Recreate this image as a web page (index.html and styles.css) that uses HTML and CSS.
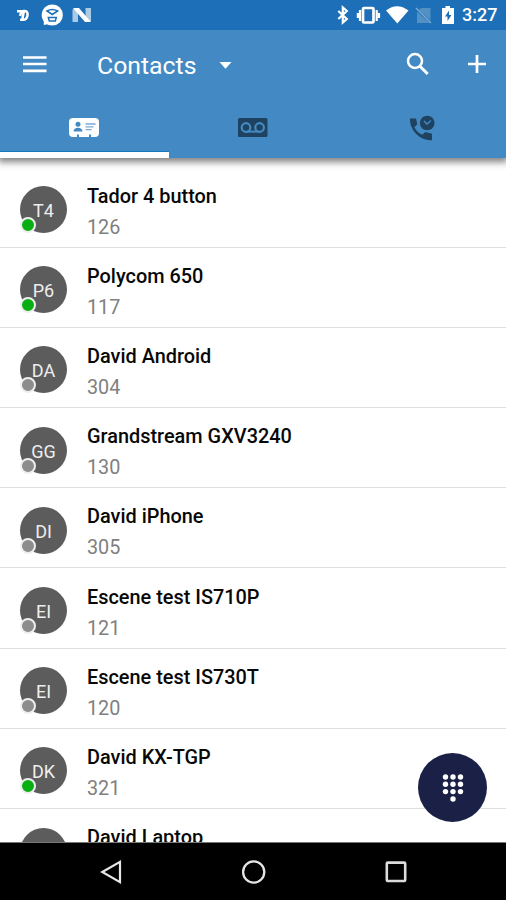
FILE: index.html
```
<!DOCTYPE html>
<html lang="en">
<head>
  <meta charset="UTF-8">
  <title>Contacts</title>
  <link rel="stylesheet" href="styles.css">
</head>
<body>

  <!-- Status bar -->
  <div class="status-bar">
    <svg class="status-left" width="100" height="30" viewBox="0 0 100 30">
      <path d="M17 11.300h4.500l-1.500 4.500M22.300 19.800l1.600-8.800h1c4.500 0 3 8.800-1.800 8.800h-3" fill="none" stroke="#fff" stroke-width="2.500"/>
      <path d="M43.800 18v7l5-1z" fill="#fff"/>
      <circle cx="52.300" cy="15" r="10.600" fill="#fff"/>
      <path d="M47 11q5.300-3 10.600 0l-5.300 3.500zM48.300 17.500h8l-1 3.500h-6z" fill="none" stroke="#1d70b7" stroke-width="1.500"/>
      <path d="M72.500 9.500l5.500-1.500v14h-5.500zM85.500 8h5.500v13l-5.500 1z" fill="#a9cbe6"/>
      <path d="M73 8h6l12 14h-6z" fill="#fff"/>
    </svg>
    <div class="status-right">
      <svg width="126" height="30" viewBox="332 0 126 30">
        <path d="M338.300 11l8.500 8-4 3.500v-15l4 3.500-8.500 8" fill="none" stroke="#fff" stroke-width="2.200"/>
        <rect x="363" y="8" width="10.500" height="14.500" rx="1" fill="none" stroke="#fff" stroke-width="2.700"/>
        <path d="M360 10v11M376.700 10v11M357.900 13v5M379 13v5" stroke="#fff" stroke-width="2.200"/>
        <path d="M386 10.500q11-8.500 22.500 0L397.300 23.600z" fill="#fff"/>
        <path d="M421 8h9.500v15H417V12z" fill="#5390c4"/>
        <path d="M415.500 8.500L431.500 23" stroke="#1d70b7" stroke-width="2.600"/>
        <path d="M416 8L431 23" stroke="#79a9d3" stroke-width="1.500"/>
        <path d="M445.500 6h4.500v2h4v16h-12V8h3.500z" fill="#fff"/>
        <path d="M449 10.500l-4 6h2.500V21l4-6H449z" fill="#1d70b7"/>
      </svg>
      <span class="clock">3:27</span>
    </div>
  </div>

  <!-- App bar with tabs -->
  <header class="app-bar">
    <div class="toolbar">
      <svg class="menu-icon" width="24" height="20" viewBox="0 0 24 20">
        <path d="M0 2.500h23.500M0 9h23.500M0 15.800h23.500" stroke="#fff" stroke-width="2.700"/>
      </svg>
      <h1 class="title">Contacts</h1>
      <svg class="caret" width="14" height="7" viewBox="0 0 14 7"><path d="M.500 0h12L6.500 6.700z" fill="#fff"/></svg>
      <svg class="search-icon" width="24" height="26" viewBox="0 0 24 26">
        <circle cx="9" cy="9" r="7" fill="none" stroke="#fff" stroke-width="2.500"/>
        <path d="M13.700 14l8 8" stroke="#fff" stroke-width="3"/>
      </svg>
      <svg class="plus-icon" width="18" height="20" viewBox="0 0 18 20"><path d="M0 9h18M9 0v18" stroke="#fff" stroke-width="2.700"/></svg>
    </div>
    <nav class="tabs">
      <a class="tab active">
        <svg width="32" height="20" viewBox="0 0 32 20">
          <rect x="1" y="0" width="30" height="19" rx="4" fill="#fff"/>
          <path d="M10 16.500V19M22 16.500V19" stroke="#438ac4" stroke-width="2"/>
          <circle cx="10" cy="6.300" r="2.500" fill="#438ac4"/>
          <path d="M5.500 13.500c0-5 9-5 9 0z" fill="#438ac4"/>
          <path d="M17.500 6h10M17.500 8.800h8M17.500 11.600h6" stroke="#7ca8d6" stroke-width="1.300"/>
        </svg>
      </a>
      <a class="tab">
        <svg width="32" height="20" viewBox="0 0 32 20">
          <rect x="1" y="0" width="29.500" height="19" rx="1.500" fill="#1e425f"/>
          <path d="M8.500 13.600h15" stroke="#438ac4" stroke-width="2"/>
          <circle cx="9" cy="9.500" r="4.300" fill="#1e425f" stroke="#438ac4" stroke-width="2.200"/>
          <circle cx="22.600" cy="9.500" r="4.300" fill="#1e425f" stroke="#438ac4" stroke-width="2.200"/>
        </svg>
      </a>
      <a class="tab">
        <svg width="28" height="26" viewBox="0 0 28 26">
          <path d="M2 3.500h6l1.300 5.700-3 3q3 5.500 8 7.600l3-2.700L24 18.700V25.300C11.500 25.600 1.600 15 2 3.500z" fill="#1e425f"/>
          <circle cx="19.200" cy="8" r="7.300" fill="#1e425f"/>
          <path d="M16 6l3 3 4-3.500" fill="none" stroke="#438ac4" stroke-width="1.400"/>
        </svg>
      </a>
    </nav>
  </header>

  <main class="contacts">
    <div class="contact">
      <div class="avatar">T4<i class="presence online"></i></div>
      <div class="info"><div class="name">Tador 4 button</div><div class="number">126</div></div>
    </div>
    <div class="contact">
      <div class="avatar">P6<i class="presence online"></i></div>
      <div class="info"><div class="name">Polycom 650</div><div class="number">117</div></div>
    </div>
    <div class="contact">
      <div class="avatar">DA<i class="presence"></i></div>
      <div class="info"><div class="name">David Android</div><div class="number">304</div></div>
    </div>
    <div class="contact">
      <div class="avatar">GG<i class="presence"></i></div>
      <div class="info"><div class="name">Grandstream GXV3240</div><div class="number">130</div></div>
    </div>
    <div class="contact">
      <div class="avatar">DI<i class="presence"></i></div>
      <div class="info"><div class="name">David iPhone</div><div class="number">305</div></div>
    </div>
    <div class="contact">
      <div class="avatar">EI<i class="presence"></i></div>
      <div class="info"><div class="name">Escene test IS710P</div><div class="number">121</div></div>
    </div>
    <div class="contact">
      <div class="avatar">EI<i class="presence"></i></div>
      <div class="info"><div class="name">Escene test IS730T</div><div class="number">120</div></div>
    </div>
    <div class="contact">
      <div class="avatar">DK<i class="presence online"></i></div>
      <div class="info"><div class="name">David KX-TGP</div><div class="number">321</div></div>
    </div>
    <div class="contact">
      <div class="avatar"></div>
      <div class="info"><div class="name">David Laptop</div></div>
    </div>
  </main>

  <!-- Dialpad button -->
  <button class="dialpad">
    <svg width="24" height="30" viewBox="0 0 24 30" fill="#fff">
      <circle cx="4.500" cy="4" r="2.700"/><circle cx="12" cy="4" r="2.700"/><circle cx="19.500" cy="4" r="2.700"/>
      <circle cx="4.500" cy="11.300" r="2.700"/><circle cx="12" cy="11.300" r="2.700"/><circle cx="19.500" cy="11.300" r="2.700"/>
      <circle cx="4.500" cy="18.600" r="2.700"/><circle cx="12" cy="18.600" r="2.700"/><circle cx="19.500" cy="18.600" r="2.700"/>
      <circle cx="12" cy="26" r="2.700"/>
    </svg>
  </button>

  <footer class="nav-bar">
    <svg width="24" height="26" viewBox="0 0 24 26"><path d="M3.300 13L21 2.800v20.400z" fill="none" stroke="#e6e6e6" stroke-width="2.200"/></svg>
    <svg width="26" height="26" viewBox="0 0 26 26"><circle cx="12.700" cy="13" r="10.600" fill="none" stroke="#e6e6e6" stroke-width="2.300"/></svg>
    <svg width="24" height="26" viewBox="0 0 24 26"><rect x="2.800" y="3.600" width="18.400" height="18.400" rx="1" fill="none" stroke="#dcdcdc" stroke-width="2.600"/></svg>
  </footer>

</body>
</html>
```
FILE: styles.css
```
body {
  margin: 0;
  height: 900px;
  display: flex;
  flex-direction: column;
  overflow: hidden;
  background-color: #fff;
  font-family: Roboto, sans-serif;
}

svg {
  display: block;
  flex: none;
}

.status-bar {
  height: 30px;
  flex: none;
  display: flex;
  justify-content: space-between;
  background-color: #1d70b7;
  z-index: 2;
}

.status-right {
  display: flex;
  align-items: center;
  width: 174px;
  color: #fff;
}

.clock {
  margin-left: 4px;
  font-size: 18px;
  font-weight: 500;
  line-height: 32px;
}

.app-bar {
  height: 128px;
  flex: none;
  background-color: #438ac4;
  box-shadow: 0 2px 7px 2px rgba(0, 0, 0, 0.5);
  z-index: 1;
}

.toolbar {
  height: 70px;
  display: flex;
  align-items: center;
  padding: 0 20px 0 23px;
}

.title {
  margin: 1px 0 0 50px;
  width: 100px;
  color: #fff;
  font-size: 24.8px;
  font-weight: 400;
  white-space: nowrap;
}

.caret {
  margin-left: 22px;
}

.search-icon {
  margin-left: auto;
}

.plus-icon {
  margin-left: 38px;
}

.tabs {
  height: 58px;
  display: flex;
}

.tab {
  flex: 1;
  box-sizing: border-box;
  display: flex;
  justify-content: center;
  align-items: center;
  padding-bottom: 2px;
}

.tab.active {
  padding-bottom: 0;
  padding-top: 4px;
  border-bottom: 6px solid #fff;
  box-shadow: inset 0 -1px #1678bd;
}

.contacts {
  flex: 1;
  min-height: 0;
  overflow: hidden;
  padding-top: 9.5px;
}

.contact {
  height: 80.2px;
  box-sizing: border-box;
  display: flex;
  align-items: center;
  padding: 5px 20px 0;
  border-bottom: 1.5px solid #dedede;
}

.avatar {
  position: relative;
  width: 47px;
  height: 47px;
  flex: none;
  border-radius: 50%;
  background-color: #5c5c5c;
  color: #eee;
  font-size: 18px;
  line-height: 49px;
  text-align: center;
}

.presence {
  position: absolute;
  left: 0;
  bottom: 0;
  width: 12px;
  height: 12px;
  border: 2px solid #eee;
  border-radius: 50%;
  background-color: #8c8c8c;
}

.presence.online {
  background-color: #08ae12;
}

.info {
  margin-left: 20px;
  height: 58px;
}

.name {
  color: #080808;
  font-size: 19.9px;
  font-weight: 500;
  line-height: 31px;
}

.number {
  color: #808080;
  font-size: 19.8px;
  line-height: 31px;
}

.dialpad {
  position: absolute;
  left: 418px;
  top: 753px;
  width: 69px;
  height: 69px;
  display: flex;
  justify-content: center;
  align-items: center;
  padding: 0;
  border: none;
  border-radius: 50%;
  background-color: #1a2046;
}

.nav-bar {
  height: 58px;
  flex: none;
  box-sizing: border-box;
  display: flex;
  justify-content: space-between;
  align-items: center;
  padding: 0 98px 0 99px;
  border-top: 1px solid #777;
  background-color: #000;
  z-index: 1;
}
```
